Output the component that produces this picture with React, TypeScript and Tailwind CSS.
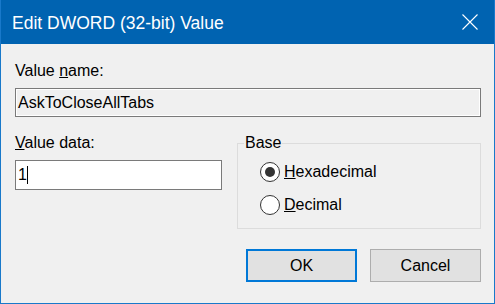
import { useState } from "react";

const font = { fontFamily: '"Liberation Sans", Arial, sans-serif' };

const Radio = ({ checked, label, accel, rest }: { checked: boolean; label: string; accel: string; rest: string }) => (
    <div className="flex h-5 items-center">
        <span className="flex size-5 items-center justify-center rounded-full border border-[#333333] bg-white">
            {checked && <span className="size-[10px] rounded-full bg-[#333333]"></span>}
        </span>
        <span className="ml-[4px] leading-5" aria-label={label}>
            <u>{accel}</u>
            {rest}
        </span>
    </div>
);

const App = () => {
    const [hex] = useState(true);

    return (
        <div
            className="flex h-[304px] w-[495px] flex-col border-x border-b border-[#1979ca] bg-[#f0f0f0] text-[16px] text-black"
            style={font}>
            <div className="flex h-[44px] shrink-0 items-center justify-between bg-[#0063b1] pt-[2px] pl-[11px] pr-[16px]">
                <p className="text-[17.5px] leading-6 text-white">Edit DWORD (32-bit) Value</p>
                <svg width="16" height="16" viewBox="0 0 16 16" className="-mt-[2px]">
                    <path d="M0.5 0.5L15.5 15.5M15.5 0.5L0.5 15.5" stroke="white" strokeWidth="1.1" fill="none" />
                </svg>
            </div>
            <div className="flex flex-col pl-[14px] pr-[13px]">
                <p className="mt-[17px] leading-5">
                    Value <u>n</u>ame:
                </p>
                <div className="mt-[7px] flex h-[29px] w-[466px] items-center border border-[#7a7a7a] bg-[#f0f0f0] pl-[2px] shadow-[inset_0_0_0_1px_#ffffff]">
                    <span className="leading-5">AskToCloseAllTabs</span>
                </div>
                <div className="mt-[16px] flex gap-[15px]">
                    <div className="w-[207px]">
                        <p className="leading-5">
                            <u>V</u>alue data:
                        </p>
                        <div className="mt-[7px] flex h-[30px] items-center border border-[#7a7a7a] bg-white pl-[2px]">
                            <span className="leading-5">1</span>
                            <span className="h-[18px] w-px bg-black"></span>
                        </div>
                    </div>
                    <fieldset className="w-[244px] border border-[#dcdcdc] pb-[13px] pl-[6px]">
                        <legend className="px-px leading-5">Base</legend>
                        <div className="ml-[16px] flex flex-col gap-[13px] pt-[9px]">
                            <Radio checked={hex} label="Hexadecimal" accel="H" rest="exadecimal" />
                            <Radio checked={!hex} label="Decimal" accel="D" rest="ecimal" />
                        </div>
                    </fieldset>
                </div>
                <div className="mt-[20px] flex justify-end gap-[13px]">
                    <button className="h-[33px] w-[111px] border-2 border-[#0078d7] bg-[#e1e1e1] leading-5">OK</button>
                    <button className="h-[33px] w-[111px] border border-[#adadad] bg-[#e1e1e1] leading-5">Cancel</button>
                </div>
            </div>
        </div>
    );
};

export default App;
